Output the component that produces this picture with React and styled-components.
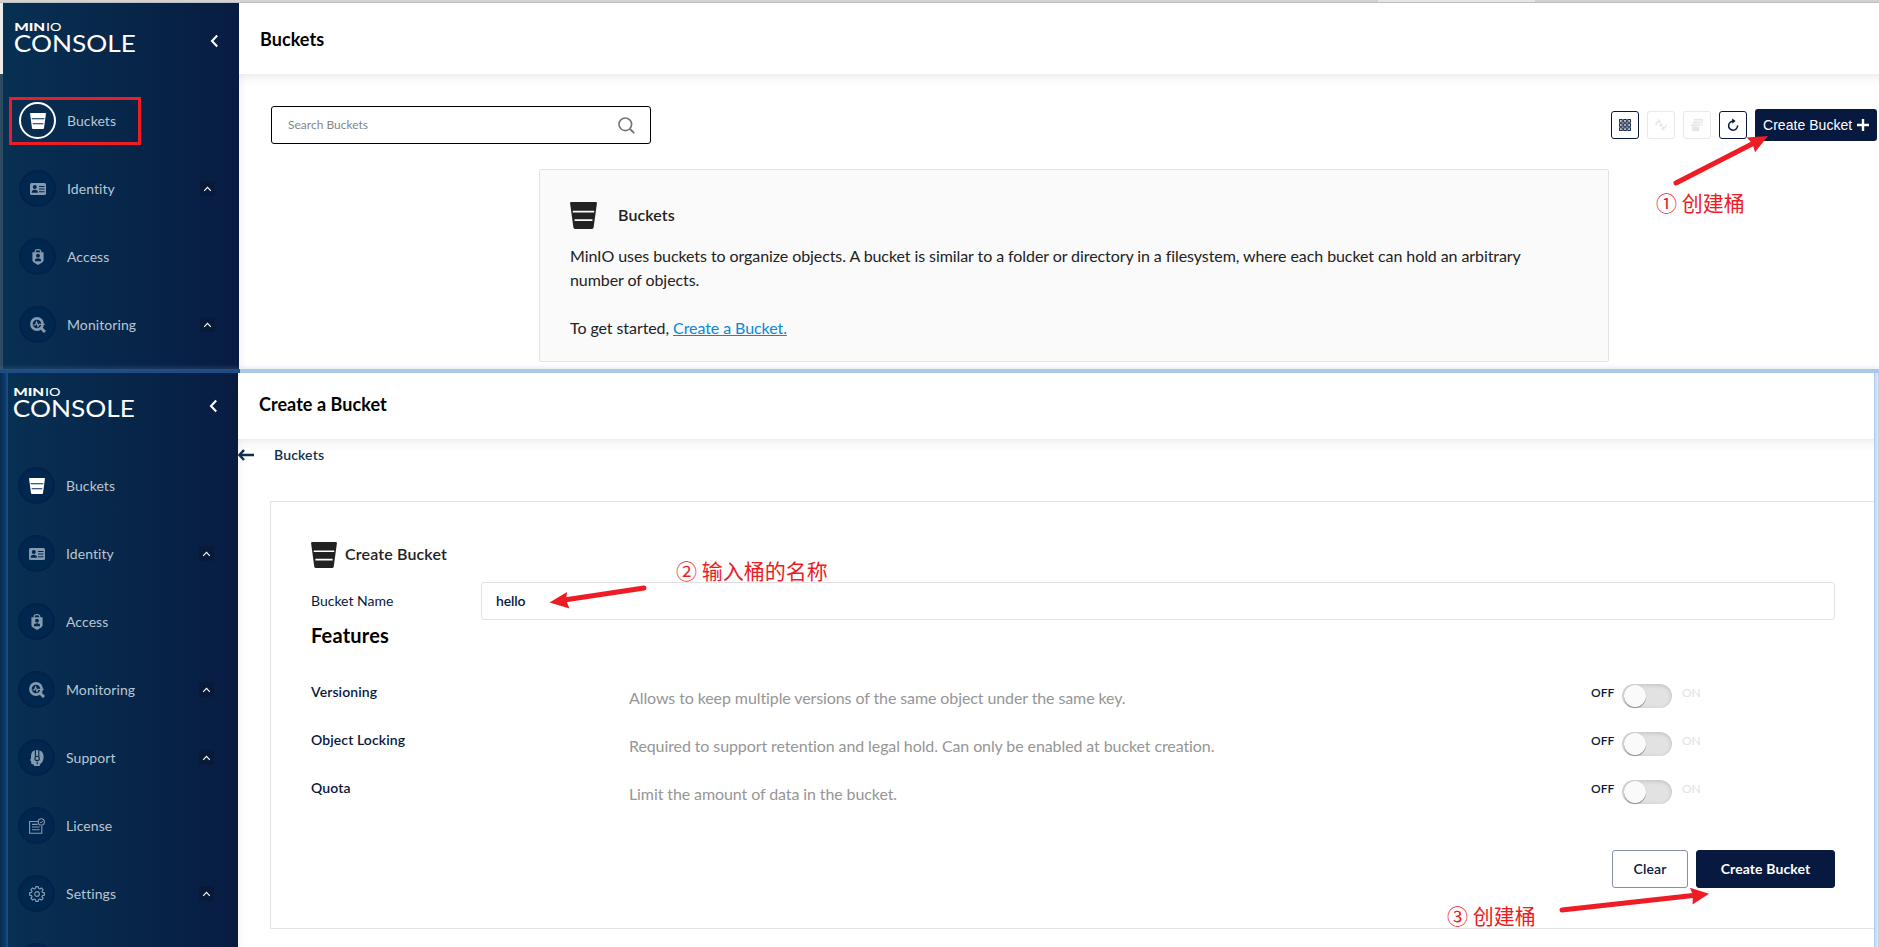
import React from "react";
import styled, { createGlobalStyle } from "styled-components";

const Global = createGlobalStyle`
  * { box-sizing: border-box; }
  body {
    margin: 0;
    background: #fff;
    overflow: hidden;
    font-family: Lato, "Noto Sans CJK SC", sans-serif;
    font-variant-ligatures: none;
  }
`;

const Page = styled.div`
  position: relative;
  width: 1879px;
  height: 947px;
  overflow: hidden;
  display: flex;
  flex-direction: column;
  background: #fff;
`;

const TopStrip = styled.div`
  flex: none;
  height: 3px;
  background: linear-gradient(90deg, #d3d3d3 1378px, #e6e6e6 1378px, #e6e6e6 1535px, #d0d1d3 1535px);
  border-bottom: 1px solid #bdbec0;
`;

const Window = styled.section`
  display: flex;
  flex: none;
  height: ${(p) => p.$height}px;
`;

const LeftEdge = styled.div`
  flex: none;
  width: ${(p) => p.$width}px;
  background: ${(p) => p.$fill};
`;

const RightEdge = styled.div`
  flex: none;
  width: 5px;
  background: linear-gradient(90deg, #a9cbf7 0 1px, #c3dafa 1px, #dfe9f8 4px, #c6d0e2 4px);
`;

const Divider = styled.div`
  position: relative;
  z-index: 1;
  flex: none;
  height: 4px;
  background: linear-gradient(180deg, #b3c3d8 0, #b0c8e6 60%, #9cc3f3 100%);
  box-shadow: 0 -1px 5px rgba(120, 170, 230, 0.28);
  clip-path: inset(-8px 0 0 0);
`;

const DividerDark = styled.div`
  width: 240px;
  height: 4px;
  background: linear-gradient(180deg, #35506f 0, #1f4a80 50%, #18508f 100%);
`;

const Sidebar = styled.aside`
  flex: none;
  width: ${(p) => p.$width}px;
  overflow: hidden;
  background: linear-gradient(90deg, #073052 0%, #081c42 100%);
`;

const SidebarInner = styled.div`
  width: 236px;
  margin-left: ${(p) => -p.$shiftX}px;
  margin-top: ${(p) => -p.$shiftY}px;
`;

const Brand = styled.div`
  display: flex;
  justify-content: space-between;
  align-items: flex-start;
  height: 99px;
  padding: 18px 19px 0 10px;
`;

const Collapse = styled.svg`
  margin-top: 13px;
`;

const Menu = styled.nav`
  display: flex;
  flex-direction: column;
  gap: 31px;
  padding: 0 24px 0 16px;
`;

const MenuRow = styled.div`
  display: flex;
  align-items: center;
  height: 37px;
`;

const IconRing = styled.span`
  flex: none;
  display: flex;
  align-items: center;
  justify-content: center;
  width: 37px;
  height: 37px;
  padding-left: 1px;
  border-radius: 50%;
  border: 2px solid ${(p) => (p.$active ? "#fff" : "#02224a")};
  background: ${(p) => (p.$active ? "transparent" : "#00274d")};
  color: ${(p) => (p.$bright ? "#fff" : "#8599af")};
`;

const MenuLabel = styled.span`
  flex: 1;
  margin-left: 11px;
  font-size: 14px;
  line-height: 20px;
  letter-spacing: 0.08px;
  padding-top: 1px;
  color: #b9c7d4;
`;

const Expander = styled.span`
  display: flex;
  align-items: center;
  justify-content: center;
  width: 15px;
  height: 15px;
  border-radius: 2px;
  background: #081a3a;
`;

const Main = styled.main`
  flex: 1;
  min-width: 0;
  display: flex;
  flex-direction: column;
  overflow: hidden;
  background: #fff;
`;

const Header = styled.header`
  flex: none;
  display: flex;
  align-items: center;
  height: ${(p) => p.$height}px;
  padding: 0 0 ${(p) => p.$lift || 0}px 21px;
  font-size: 18px;
  font-weight: 700;
  letter-spacing: 0.05px;
  color: #000;
`;

const Content = styled.div`
  flex: 1;
  min-height: 0;
  background:
    linear-gradient(180deg, rgba(0, 0, 0, 0.063) 0, rgba(0, 0, 0, 0.025) 5px, transparent 13px),
    linear-gradient(90deg, rgba(0, 0, 0, 0.03) 0, transparent 8px);
`;

const Toolbar = styled.div`
  display: flex;
  align-items: center;
  height: 38px;
  margin-top: 32px;
  padding: 0 2px 0 32px;
`;

const Search = styled.div`
  display: flex;
  align-items: center;
  justify-content: space-between;
  width: 380px;
  height: 38px;
  padding: 0 15px 0 16px;
  margin-right: auto;
  border: 1px solid #000;
  border-radius: 3px;
  background: #fff;
  font-size: 12px;
  color: #858585;
`;

const Placeholder = styled.span`
  padding-bottom: 2px;
`;

const ToolButton = styled.button`
  display: flex;
  align-items: center;
  justify-content: center;
  width: 28px;
  height: 28px;
  margin-right: 8px;
  padding: 0;
  border: 1px solid ${(p) => (p.$off ? "#e9e9e9" : "#07193e")};
  border-radius: 3px;
  background: #fff;
  color: ${(p) => (p.$off ? "#e6e6e6" : "#07193e")};
`;

const CreateTop = styled.button`
  display: flex;
  align-items: center;
  justify-content: space-between;
  width: 122px;
  height: 32px;
  padding: 0 8px;
  border: 0;
  border-radius: 3px;
  background: #07193e;
  color: #fff;
  font: 14px "Liberation Sans", Arial, sans-serif;
  letter-spacing: 0.04px;
  white-space: nowrap;
`;

const HelpBox = styled.div`
  width: 1070px;
  height: 193px;
  margin: 25px 0 0 300px;
  padding: 31px 30px 0;
  border: 1px solid #e2e2e2;
  border-radius: 2px;
  background: #fafafa;
  color: #222;
`;

const HelpTitle = styled.div`
  display: flex;
  align-items: center;
  gap: 21px;
  height: 28px;
  font-size: 16px;
  line-height: 20px;
  font-weight: 600;
  letter-spacing: 0.1px;
  color: #222;
`;

const HelpTitleText = styled.span`
  padding-bottom: 1px;
`;

const HelpText = styled.p`
  margin: ${(p) => p.$top}px 0 0;
  font-size: 16px;
  line-height: 24px;
  letter-spacing: -0.08px;
`;

const Link = styled.a`
  color: #0b88cf;
  text-decoration: underline;
`;

const BackRow = styled.div`
  display: flex;
  align-items: center;
  gap: 20px;
  height: 32px;
  font-size: 14px;
  font-weight: 600;
  color: #0c2f52;
`;

const BackLabel = styled.span`
  padding-bottom: 2px;
  letter-spacing: 0.15px;
`;

const Card = styled.div`
  height: 428px;
  margin: 30px 0 0 32px;
  padding: 40px 39px 0 40px;
  border: 1px solid #e2e2e2;
  border-right: 0;
  border-radius: 2px 0 0 2px;
  color: #07193e;
`;

const CardTitle = styled.div`
  display: flex;
  align-items: center;
  gap: 8px;
  height: 26px;
  font-size: 16px;
  line-height: 20px;
  font-weight: 600;
  letter-spacing: 0.15px;
  color: #222;
`;

const CardTitleText = styled.span`
  padding-bottom: 2px;
`;

const Field = styled.div`
  display: flex;
  align-items: center;
  height: 38px;
  margin-top: 14px;
`;

const FieldLabel = styled.label`
  width: 170px;
  padding-bottom: 2px;
  font-size: 14px;
`;

const FieldInput = styled.div`
  flex: 1;
  height: 38px;
  padding: 0 14px;
  border: 1px solid #e2e2e2;
  border-radius: 3px;
  font-size: 14px;
  line-height: 36px;
  font-weight: 600;
  letter-spacing: -0.15px;
`;

const FeaturesTitle = styled.h2`
  margin: 3px 0 24px;
  font-size: 20px;
  line-height: 25px;
  font-weight: 700;
  letter-spacing: 0.2px;
  color: #000;
`;

const Feature = styled.div`
  display: grid;
  grid-template-columns: 318px 1fr 244px;
  height: 48px;
`;

const FeatureName = styled.div`
  padding-top: 10px;
  font-size: 14px;
  line-height: 20px;
  font-weight: 600;
  letter-spacing: 0.1px;
`;

const FeatureText = styled.div`
  padding-top: 14px;
  font-size: 16px;
  line-height: 24px;
  letter-spacing: -0.1px;
  color: #969696;
`;

const SwitchGroup = styled.div`
  display: flex;
  padding-top: 12px;
`;

const SwitchLabel = styled.span`
  width: ${(p) => p.$width}px;
  padding-top: 1px;
  font-size: 12px;
  line-height: 16px;
  font-weight: ${(p) => (p.$on ? 400 : 600)};
  color: ${(p) => (p.$on ? "#e2e2e2" : "#07193e")};
`;

const Track = styled.span`
  width: 50px;
  height: 24px;
  margin-right: 10px;
  padding: 1px 2px;
  border-radius: 12px;
  background: #e2e2e2;
  box-shadow: inset 0 1px 4px rgba(0, 0, 0, 0.16);
`;

const Knob = styled.span`
  display: block;
  width: 22px;
  height: 22px;
  border-radius: 50%;
  background: #fafafa;
  border: 1px solid #fff;
  box-shadow: 0 1px 1px rgba(0, 0, 0, 0.35);
`;

const Actions = styled.div`
  display: flex;
  justify-content: flex-end;
  gap: 8px;
  margin-top: 34px;
`;

const ActionButton = styled.button`
  width: ${(p) => p.$width}px;
  height: 38px;
  padding: 0 0 2px;
  border: 1px solid ${(p) => (p.$primary ? "#07193e" : "#8690a5")};
  border-radius: 3px;
  background: ${(p) => (p.$primary ? "#07193e" : "#fff")};
  color: ${(p) => (p.$primary ? "#fff" : "#07193e")};
  font: ${(p) => (p.$primary ? 700 : 600)} 14px Lato, sans-serif;
  letter-spacing: 0.1px;
`;

const Highlight = styled.div`
  position: absolute;
  left: 9px;
  top: 97px;
  width: 132px;
  height: 48px;
  border: 3px solid #ee1c24;
`;

const Note = styled.div`
  position: absolute;
  left: ${(p) => p.$x}px;
  top: ${(p) => p.$y}px;
  font-family: "Noto Sans CJK SC", sans-serif;
  font-size: 21px;
  font-weight: 400;
  line-height: 28px;
  color: #ee1c24;
  white-space: pre;
`;

const ArrowSvg = styled.svg`
  position: absolute;
  left: 0;
  top: 0;
  pointer-events: none;
`;

const BucketIcon = ({ size, line = "#fafafa", fill = "#222" }) => (
  <svg width={size} height={size} viewBox="0 0 27 27">
    <path d="M1.2 0H25.8Q27.1 0 26.9 1.4L23.6 25.6Q23.3 27 22 27H5Q3.7 27 3.4 25.6L.1 1.4Q-.1 0 1.2 0Z" fill={fill} />
    <path d="M2.8 9.6H24.2M4.6 18.2H22.4" stroke={line} strokeWidth="1.8" />
  </svg>
);

const IdentityIcon = () => (
  <svg width="16" height="12" viewBox="0 0 16 12">
    <rect width="16" height="12" rx="1.5" fill="currentColor" />
    <circle cx="4.8" cy="4" r="2" fill="#00274d" />
    <path d="M1.5 9.8Q1.8 6.8 4.8 6.8T8 9.8ZM9 3H14.5V4H9ZM9 5.6H14.5V6.6H9ZM9 8.2H14.5V9.2H9Z" fill="#00274d" />
  </svg>
);

const AccessIcon = () => (
  <svg width="16" height="16" viewBox="0 0 16 16">
    <path d="M5.2 4V2.6Q5.2.6 8 .6T10.8 2.6V4" fill="none" stroke="currentColor" strokeWidth="1.2" />
    <path d="M2.4 3.2H13.6V11.5Q13.6 13 8 16Q2.4 13 2.4 11.5Z" fill="currentColor" />
    <circle cx="8" cy="6.7" r="1.9" fill="#00274d" />
    <path d="M5 12.2V11Q5 9.2 8 9.2T11 11V12.2Z" fill="#00274d" />
  </svg>
);

const MonitoringIcon = () => (
  <svg width="16" height="16" viewBox="0 0 16 16" fill="none" stroke="currentColor">
    <circle cx="7" cy="7" r="5.6" strokeWidth="2.6" />
    <path d="M10.8 10.8L15 15" strokeWidth="3" />
    <path d="M3.5 8H5.4L6.6 5L8 9.4L9 7.4H14.6" strokeWidth="1.2" />
  </svg>
);

const SupportIcon = () => (
  <svg width="14" height="16" viewBox="0 0 14 16">
    <path d="M7 0Q1 0 1 6V8L0 10.5L1.2 11V13.4Q1.4 14.4 4 14.4V16H9.8V14.4Q14 11.5 13.6 6Q13.2 0 7 0Z" fill="currentColor" />
    <path d="M5.4 0V6.3M8.8 0V6.3M7.2 11.8V14.2" stroke="#00274d" strokeWidth="1.1" />
    <circle cx="7.1" cy="8.4" r="2.2" fill="none" stroke="#00274d" strokeWidth="1.1" />
  </svg>
);

const LicenseIcon = () => (
  <svg width="16" height="16" viewBox="0 0 16 16" fill="none" stroke="currentColor">
    <path d="M9 3.5H.6V15.3H12.8V8M3 6.4H8.6M3 9H10.6M3 11.8H10.6" strokeWidth="1.1" />
    <circle cx="12.3" cy="3.9" r="3.1" strokeWidth="1.1" />
    <path d="M10.9 3.9L12 5L14 2.8" strokeWidth=".9" />
  </svg>
);

const SettingsIcon = () => (
  <svg width="16" height="16" viewBox="0 0 16 16" fill="none" stroke="currentColor" strokeLinejoin="round">
    <path
      d="M6.8.6H9.2L9.6 2.5L10.8 3L12.4 1.9L14.1 3.6L13 5.2L13.5 6.4L15.4 6.8V9.2L13.5 9.6L13 10.8L14.1 12.4L12.4 14.1L10.8 13L9.6 13.5L9.2 15.4H6.8L6.4 13.5L5.2 13L3.6 14.1L1.9 12.4L3 10.8L2.5 9.6L.6 9.2V6.8L2.5 6.4L3 5.2L1.9 3.6L3.6 1.9L5.2 3L6.4 2.5Z"
      strokeWidth="1.2"
    />
    <circle cx="8" cy="8" r="2.3" strokeWidth="1.2" />
  </svg>
);

const Logo = () => (
  <svg width="126" height="36" viewBox="0 0 126 36" fill="#fff" fontFamily="Lato, sans-serif">
    <text x="1.2" y="9.8" fontSize="11" fontWeight="900" textLength="31" lengthAdjust="spacingAndGlyphs">MIN</text>
    <text x="33" y="9.8" fontSize="11" fontWeight="400" textLength="15.5" lengthAdjust="spacingAndGlyphs">IO</text>
    <text x="0.8" y="31.2" fontSize="23.6" fontWeight="400" textLength="122" lengthAdjust="spacingAndGlyphs">CONSOLE</text>
  </svg>
);

const icons = {
  Identity: <IdentityIcon />,
  Access: <AccessIcon />,
  Monitoring: <MonitoringIcon />,
  Support: <SupportIcon />,
  License: <LicenseIcon />,
  Settings: <SettingsIcon />,
};

const expandable = ["Identity", "Monitoring", "Support", "Settings"];

const ConsoleSidebar = ({ width, shiftX = 0, shiftY = 0, items, active }) => (
  <Sidebar $width={width}>
    <SidebarInner $shiftX={shiftX} $shiftY={shiftY}>
      <Brand>
        <Logo />
        <Collapse width="11" height="14" viewBox="0 0 11 14">
          <path d="M8.2 1.6L3 7L8.2 12.4" fill="none" stroke="#fff" strokeWidth="2.1" />
        </Collapse>
      </Brand>
      <Menu>
        {items.map((name, i) => (
          <MenuRow key={i}>
            <IconRing $active={active && name === "Buckets"} $bright={name === "Buckets"}>
              {name === "Buckets" ? <BucketIcon size={16} fill="#fff" line="#05294e" /> : icons[name]}
            </IconRing>
            <MenuLabel>{name}</MenuLabel>
            {expandable.includes(name) && (
              <Expander>
                <svg width="9" height="6" viewBox="0 0 9 6">
                  <path d="M1.2 4.8L4.5 1.4L7.8 4.8" fill="none" stroke="#fff" strokeWidth="1.1" />
                </svg>
              </Expander>
            )}
          </MenuRow>
        ))}
      </Menu>
    </SidebarInner>
  </Sidebar>
);

const features = [
  ["Versioning", "Allows to keep multiple versions of the same object under the same key."],
  ["Object Locking", "Required to support retention and legal hold. Can only be enabled at bucket creation."],
  ["Quota", "Limit the amount of data in the bucket."],
];

const gridCells = [0.6, 4.7, 8.8];

export default function App() {
  return (
    <Page>
      <Global />
      <TopStrip />
      <Window $height={366}>
        <LeftEdge $width={3} $fill="linear-gradient(180deg, #ececec 71px, #2d4c61 71px)" />
        <ConsoleSidebar width={236} active items={["Buckets", "Identity", "Access", "Monitoring"]} />
        <Main>
          <Header $height={71}>Buckets</Header>
          <Content>
            <Toolbar>
              <Search>
                <Placeholder>Search Buckets</Placeholder>
                <svg width="17" height="17" viewBox="0 0 17 17" fill="none" stroke="#757575">
                  <circle cx="7.3" cy="7.3" r="6.3" strokeWidth="1.6" />
                  <path d="M12 12L16.2 16.2" strokeWidth="1.8" />
                </svg>
              </Search>
              <ToolButton>
                <svg width="12" height="12" viewBox="0 0 12 12" fill="none" stroke="currentColor" strokeWidth="1">
                  {gridCells.map((y) => gridCells.map((x) => <rect key={`${x}-${y}`} x={x} y={y} width="2.6" height="2.6" />))}
                </svg>
              </ToolButton>
              <ToolButton $off>
                <svg width="12" height="12" viewBox="0 0 12 12" fill="none" stroke="currentColor" strokeWidth="1.2">
                  <circle cx="6" cy="6" r="1.6" fill="currentColor" stroke="none" />
                  <path d="M1.2 6.6Q.6 2.6 4.6 2.4M3 .4L5 2.4L3.2 4.2M10.8 5.4Q11.4 9.4 7.4 9.6M9 7.8L7 9.6L8.8 11.6" />
                </svg>
              </ToolButton>
              <ToolButton $off>
                <svg width="12" height="12" viewBox="0 0 12 12" fill="currentColor">
                  <path d="M3 0H12L11 7H10L10.6 1.6H3ZM1.4 2.4H10L9.7 4.6H1.6ZM0 5.2H9.2L8.9 7.2H.3ZM.6 7.8H8.6L8 12H1.2Z" />
                </svg>
              </ToolButton>
              <ToolButton>
                <svg width="12" height="14" viewBox="0 0 12 14">
                  <path d="M6.6 3.2A4.5 4.5 0 1 0 10.6 7.4" fill="none" stroke="currentColor" strokeWidth="1.5" />
                  <path d="M5.2 .6L8.6 3.1L5.2 5.8Z" fill="currentColor" />
                </svg>
              </ToolButton>
              <CreateTop>
                Create Bucket
                <svg width="12" height="12" viewBox="0 0 12 12">
                  <path d="M6 0V12M0 6H12" stroke="#fff" strokeWidth="2.4" />
                </svg>
              </CreateTop>
            </Toolbar>
            <HelpBox>
              <HelpTitle>
                <BucketIcon size={27} />
                <HelpTitleText>Buckets</HelpTitleText>
              </HelpTitle>
              <HelpText $top={15}>
                MinIO uses buckets to organize objects. A bucket is similar to a folder or directory in a filesystem, where each bucket can hold an arbitrary
                <br />
                number of objects.
              </HelpText>
              <HelpText $top={24}>
                To get started, <Link>Create a Bucket.</Link>
              </HelpText>
            </HelpBox>
          </Content>
        </Main>
      </Window>
      <Divider>
        <DividerDark />
      </Divider>
      <Window $height={574}>
        <LeftEdge $width={8} $fill="linear-gradient(90deg, #0a2c50 0, #0c3a68 5px, #13529a 8px)" />
        <ConsoleSidebar
          width={230}
          shiftX={6}
          shiftY={5}
          items={["Buckets", "Identity", "Access", "Monitoring", "Support", "License", "Settings", ""]}
        />
        <Main>
          <Header $height={66} $lift={4}>Create a Bucket</Header>
          <Content>
            <BackRow>
              <svg width="16" height="12" viewBox="0 0 16 12">
                <path d="M6 1L1.4 6L6 11M1.4 6H16" fill="none" stroke="#0c2f52" strokeWidth="2.5" />
              </svg>
              <BackLabel>Buckets</BackLabel>
            </BackRow>
            <Card>
              <CardTitle>
                <BucketIcon size={26} line="#fff" />
                <CardTitleText>Create Bucket</CardTitleText>
              </CardTitle>
              <Field>
                <FieldLabel>Bucket Name</FieldLabel>
                <FieldInput>hello</FieldInput>
              </Field>
              <FeaturesTitle>Features</FeaturesTitle>
              {features.map(([name, text]) => (
                <Feature key={name}>
                  <FeatureName>{name}</FeatureName>
                  <FeatureText>{text}</FeatureText>
                  <SwitchGroup>
                    <SwitchLabel $width={31}>OFF</SwitchLabel>
                    <Track>
                      <Knob />
                    </Track>
                    <SwitchLabel $on>ON</SwitchLabel>
                  </SwitchGroup>
                </Feature>
              ))}
              <Actions>
                <ActionButton $width={76}>Clear</ActionButton>
                <ActionButton $width={139} $primary>Create Bucket</ActionButton>
              </Actions>
            </Card>
          </Content>
        </Main>
        <RightEdge />
      </Window>
      <Highlight />
      <Note $x={1656} $y={188}>① 创建桶</Note>
      <Note $x={676} $y={556}>② 输入桶的名称</Note>
      <Note $x={1447} $y={901}>③ 创建桶</Note>
      <ArrowSvg width="1879" height="947" viewBox="0 0 1879 947" stroke="#ee1c24" fill="#ee1c24" strokeLinecap="round">
        <path d="M1676 183L1753 143.5M644 588L566 599.8M1562 910L1693 895.5" strokeWidth="5" />
        <path d="M1768 136L1746.7 137.5L1752.5 143.5L1755 152.3ZM549.5 602.5L567 592L566 600L569.5 608.5ZM1709 893.7L1690 887.7L1693 895.5L1692.5 904.5Z" stroke="none" />
      </ArrowSvg>
    </Page>
  );
}
